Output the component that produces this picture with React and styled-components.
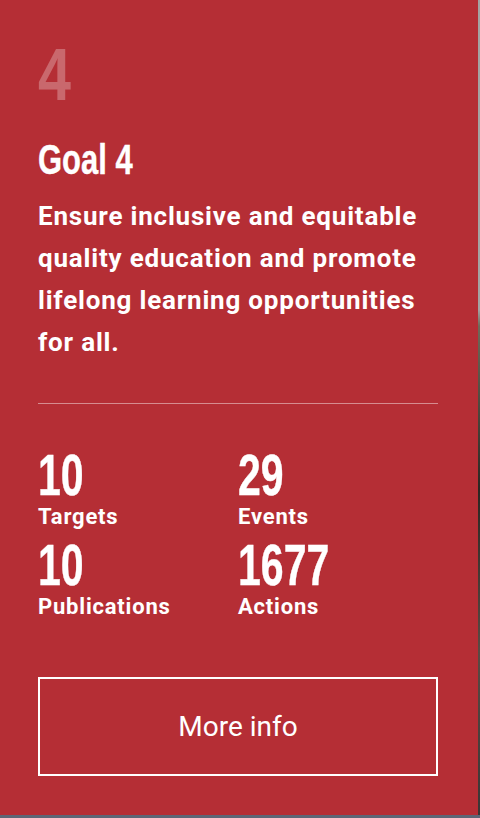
import React from "react";
import styled, { createGlobalStyle } from "styled-components";

const Global = createGlobalStyle`
  html, body { margin: 0; padding: 0; }
  body {
    width: 480px;
    height: 818px;
    overflow: hidden;
    background: #5d6676;
    font-family: Roboto, "Liberation Sans", sans-serif;
  }
`;

const Page = styled.div`
  display: flex;
  width: 480px;
  height: 815px;
`;

const Card = styled.section`
  width: 478px;
  height: 815px;
  box-sizing: border-box;
  background: #b52e35;
  color: #fff;
  padding: 38px 40px 0 38px;
  display: flex;
  flex-direction: column;
  align-items: flex-start;
`;

const Edge = styled.div`
  flex: 1;
  background: linear-gradient(180deg, #a3a3a3 0%, #a3a3a3 38%, #6f6a5a 40%, #2b2622 60%, #5a4a44 80%, #3a3535 100%);
`;

const Condensed = styled.div`
  display: inline-block;
  font-family: "Liberation Sans", Arial, sans-serif;
  font-weight: 700;
  line-height: 1;
  transform: scaleX(${(p) => p.$squeeze || 0.72});
  transform-origin: left center;
  white-space: nowrap;
`;

const BigNumber = styled(Condensed)`
  font-size: 74px;
  color: rgba(255, 255, 255, 0.28);
`;

const Title = styled(Condensed)`
  margin-top: 26px;
  font-size: 43px;
  -webkit-text-stroke: 0.4px #fff;
`;

const Description = styled.p`
  margin: 14px 0 0;
  font-size: 26px;
  font-weight: 700;
  letter-spacing: 0.8px;
  line-height: 42px;
`;

const Divider = styled.hr`
  align-self: stretch;
  margin: 40px 0 0;
  border: 0;
  height: 1px;
  background: rgba(255, 255, 255, 0.45);
`;

const Stats = styled.div`
  margin-top: 43px;
  display: grid;
  grid-template-columns: 200px 1fr;
  row-gap: 8px;
  align-self: stretch;
`;

const Stat = styled.div`
  display: flex;
  flex-direction: column;
  align-items: flex-start;
`;

const StatValue = styled(Condensed)`
  font-size: 57px;
  -webkit-text-stroke: 0.4px #fff;
`;

const StatLabel = styled.div`
  margin-top: 1px;
  font-size: 22px;
  font-weight: 700;
  letter-spacing: 0.8px;
  line-height: 24px;
`;

const MoreButton = styled.button`
  align-self: stretch;
  margin-top: 58px;
  height: 99px;
  box-sizing: border-box;
  border: 2px solid #fff;
  background: transparent;
  color: #fff;
  font-family: Roboto, "Liberation Sans", sans-serif;
  font-size: 28px;
  font-weight: 400;
  cursor: pointer;
`;

const stats = [
  { value: "10", label: "Targets" },
  { value: "29", label: "Events" },
  { value: "10", label: "Publications" },
  { value: "1677", label: "Actions" },
];

export default function App() {
  return (
    <>
      <Global />
      <Page>
        <Card>
          <BigNumber $squeeze={0.8}>4</BigNumber>
          <Title>Goal 4</Title>
          <Description>
            Ensure inclusive and equitable quality education and promote lifelong learning opportunities for all.
          </Description>
          <Divider />
          <Stats>
            {stats.map((s, i) => (
              <Stat key={i}>
                <StatValue>{s.value}</StatValue>
                <StatLabel>{s.label}</StatLabel>
              </Stat>
            ))}
          </Stats>
          <MoreButton>More info</MoreButton>
        </Card>
        <Edge />
      </Page>
    </>
  );
}
